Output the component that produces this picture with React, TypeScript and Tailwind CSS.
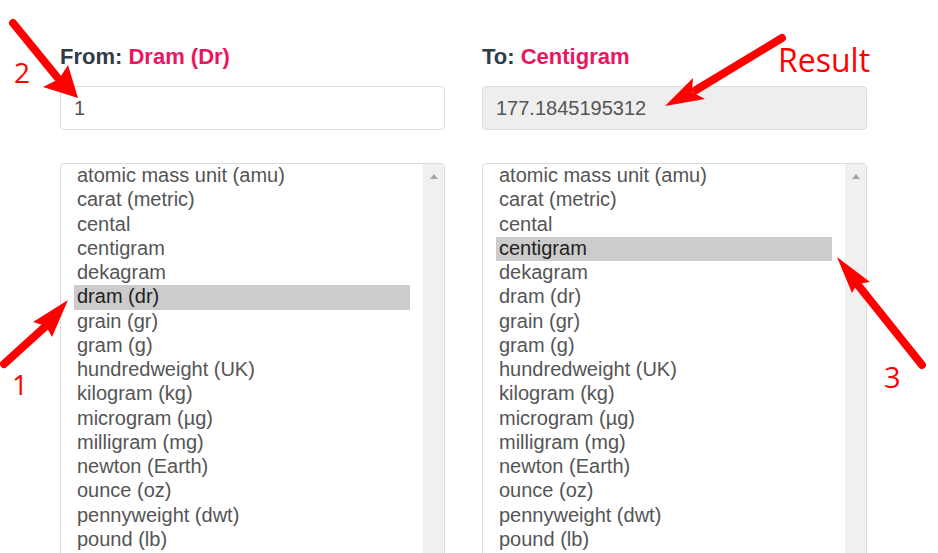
const UNITS = [
  'atomic mass unit (amu)',
  'carat (metric)',
  'cental',
  'centigram',
  'dekagram',
  'dram (dr)',
  'grain (gr)',
  'gram (g)',
  'hundredweight (UK)',
  'kilogram (kg)',
  'microgram (µg)',
  'milligram (mg)',
  'newton (Earth)',
  'ounce (oz)',
  'pennyweight (dwt)',
  'pound (lb)',
];

type Pt = [number, number];

const ARROWS: { tail: Pt; shaftEnd: Pt; head: Pt[] }[] = [
  { tail: [13, 23], shaftEnd: [57, 77], head: [[78, 98], [43, 87], [59, 79], [68, 65]] },
  { tail: [782, 38], shaftEnd: [696, 90], head: [[665, 106], [693, 78], [692, 92], [705, 99]] },
  { tail: [4, 364], shaftEnd: [47, 325], head: [[68, 300], [33, 322], [46, 326], [52, 337]] },
  { tail: [922, 365], shaftEnd: [858, 285], head: [[837, 257], [852, 293], [857, 284], [870, 282]] },
];

const UnitList = ({ selected }: { selected: string }) => (
  <div className="mt-[33px] flex h-[420px] overflow-hidden rounded-[4px] border border-[#dcdcdc]">
    <div className="flex-1 px-[13px]">
      {UNITS.map((unit) => (
        <div
          key={unit}
          className={
            unit === selected
              ? 'h-[24.27px] whitespace-nowrap bg-[#cccccc] px-[3px] text-[20px] leading-[23px] text-[#222]'
              : 'h-[24.27px] whitespace-nowrap px-[3px] text-[20px] leading-[23px] text-[#555]'
          }
        >
          {unit}
        </div>
      ))}
    </div>
    <div className="flex w-[21px] justify-center bg-[#f0f0f0] pt-[10px]">
      <div className="h-0 w-0 border-x-[4.5px] border-b-[5px] border-x-transparent border-b-[#a3a3a3]" />
    </div>
  </div>
);

export default function App() {
  return (
    <div className="relative h-[553px] w-[938px] overflow-hidden bg-white font-['Liberation_Sans',Arial,sans-serif]">
      <div className="flex gap-[37px] pl-[60px] pt-[44px]">
        <div className="w-[385px]">
          <div className="h-[26px] text-[22px] font-bold leading-[26px] text-[#2f3b46]">
            From: <span className="text-[#ec1461]">Dram (Dr)</span>
          </div>
          <div className="mt-[16px] flex h-[44px] items-center rounded-[4px] border border-[#dcdcdc] bg-white pl-[13px] text-[20px] text-[#555]">
            1
          </div>
          <UnitList selected="dram (dr)" />
        </div>
        <div className="w-[385px]">
          <div className="h-[26px] text-[22px] font-bold leading-[26px] text-[#2f3b46]">
            To: <span className="text-[#ec1461]">Centigram</span>
          </div>
          <div className="mt-[16px] flex h-[44px] items-center rounded-[4px] border border-[#dcdcdc] bg-[#eeeeee] pl-[13px] text-[20px] text-[#555]">
            177.1845195312
          </div>
          <UnitList selected="centigram" />
        </div>
      </div>

      {/* annotations drawn over the form */}
      <svg className="pointer-events-none absolute inset-0" width={938} height={553}>
        {ARROWS.map((a, i) => (
          <g key={i}>
            <line
              x1={a.tail[0]}
              y1={a.tail[1]}
              x2={a.shaftEnd[0]}
              y2={a.shaftEnd[1]}
              stroke="#ff0000"
              strokeWidth={8}
              strokeLinecap="round"
            />
            <polygon points={a.head.map((p) => p.join(',')).join(' ')} fill="#ff0000" />
          </g>
        ))}
      </svg>
      <div className="absolute left-[14px] top-[58px] font-['Open_Sans',sans-serif] text-[28px] leading-none text-[#ff0000]">2</div>
      <div className="absolute left-[12px] top-[370px] font-['Open_Sans',sans-serif] text-[28px] leading-none text-[#ff0000]">1</div>
      <div className="absolute left-[884px] top-[362px] font-['Open_Sans',sans-serif] text-[29px] leading-none text-[#ff0000]">3</div>
      <div className="absolute left-[778px] top-[44px] font-['Open_Sans',sans-serif] text-[32px] leading-none text-[#ff0000]">Result</div>
    </div>
  );
}
